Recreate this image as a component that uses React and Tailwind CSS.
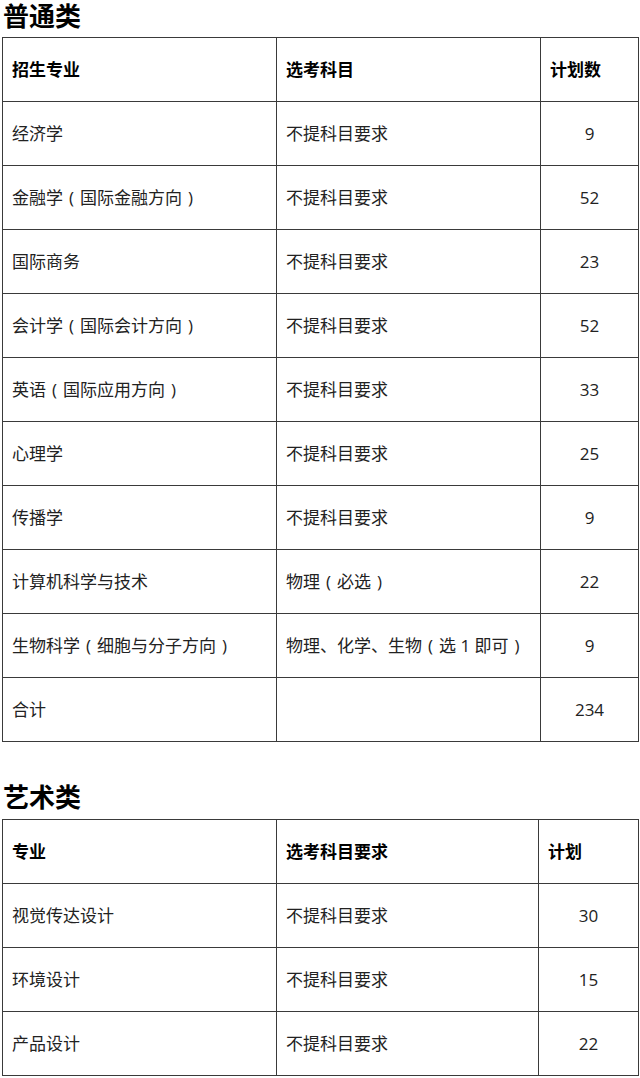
const general = [
  ['经济学', '不提科目要求', '9'],
  ['金融学（国际金融方向）', '不提科目要求', '52'],
  ['国际商务', '不提科目要求', '23'],
  ['会计学（国际会计方向）', '不提科目要求', '52'],
  ['英语（国际应用方向）', '不提科目要求', '33'],
  ['心理学', '不提科目要求', '25'],
  ['传播学', '不提科目要求', '9'],
  ['计算机科学与技术', '物理（必选）', '22'],
  ['生物科学（细胞与分子方向）', '物理、化学、生物（选 1 即可）', '9'],
  ['合计', '', '234'],
];

const art = [
  ['视觉传达设计', '不提科目要求', '30'],
  ['环境设计', '不提科目要求', '15'],
  ['产品设计', '不提科目要求', '22'],
];

const font = { fontFamily: '"Open Sans", "Noto Sans CJK SC", sans-serif' };

// full-width parens sit centred in their em box in the source font
function Label({ text }) {
  return text.split(/([（）])/).map((part, i) => {
    if (part === '（') return <span key={i} className="inline-block w-[1em] text-center">(</span>;
    if (part === '）') return <span key={i} className="inline-block w-[1em] text-center">)</span>;
    return part;
  });
}

function PlanTable({ head, rows, widths }) {
  return (
    <table className="border-collapse table-fixed w-[636px] text-[17px] text-[#222]">
      <colgroup>
        {widths.map((w, i) => <col key={i} className={w} />)}
      </colgroup>
      <thead>
        <tr className="h-[64px]">
          {head.map((h, i) => (
            <th key={i} className="border border-[#3a3a3a] px-[9px] text-left font-bold text-black">{h}</th>
          ))}
        </tr>
      </thead>
      <tbody>
        {rows.map((r, i) => (
          <tr key={i} className="h-[64px]">
            <td className="border border-[#3a3a3a] px-[9px] whitespace-nowrap"><Label text={r[0]} /></td>
            <td className="border border-[#3a3a3a] px-[9px] whitespace-nowrap"><Label text={r[1]} /></td>
            <td className="border border-[#3a3a3a] px-[9px] text-center">{r[2]}</td>
          </tr>
        ))}
      </tbody>
    </table>
  );
}

export default function App() {
  return (
    <div className="w-[640px] bg-white pl-[2px]" style={font}>
      <h2 className="text-[26px] font-bold leading-[26px] text-black pt-[3px] pb-[8px] pl-[1px]">普通类</h2>
      <PlanTable
        head={['招生专业', '选考科目', '计划数']}
        rows={general}
        widths={['w-[274px]', 'w-[264px]', 'w-[98px]']}
      />
      <h2 className="text-[26px] font-bold leading-[32px] text-black mt-[39px] pb-[6px] pl-[1px]">艺术类</h2>
      <PlanTable
        head={['专业', '选考科目要求', '计划']}
        rows={art}
        widths={['w-[274px]', 'w-[262px]', 'w-[100px]']}
      />
    </div>
  );
}
